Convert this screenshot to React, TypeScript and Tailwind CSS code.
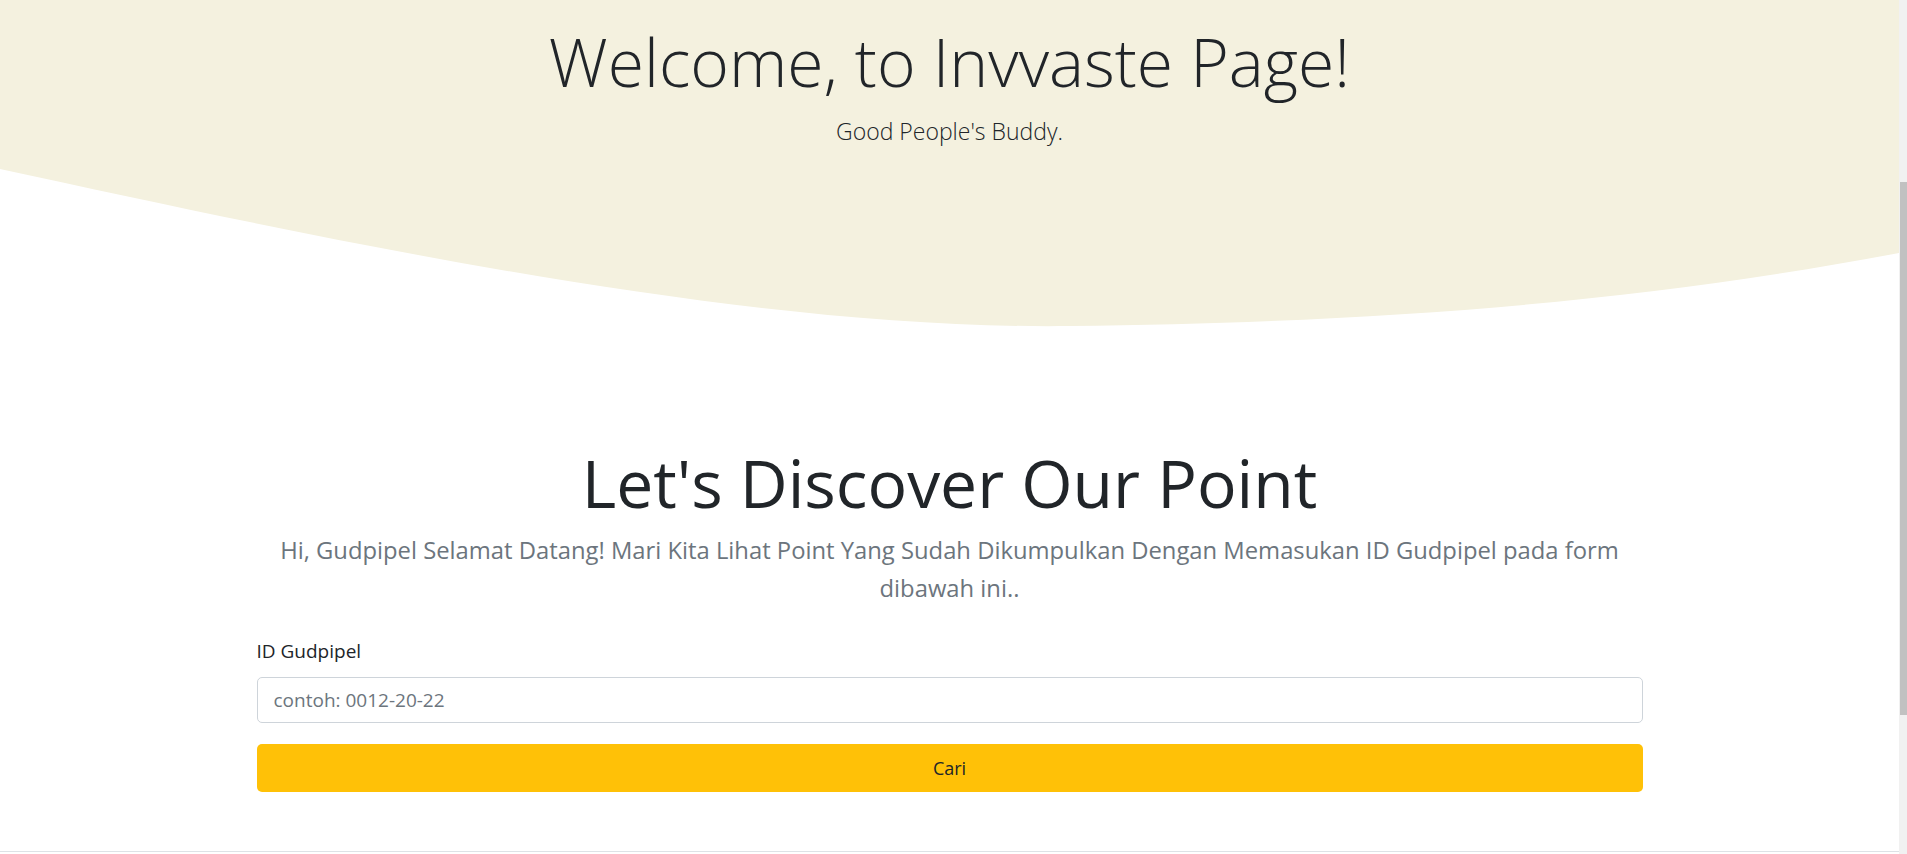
export default function App() {
  const font = { fontFamily: '"Open Sans", "Noto Sans", Arial, sans-serif' };
  return (
    <div className="flex h-[854px] w-[1907px] overflow-hidden bg-white text-[#212529]" style={font}>
      <div className="flex w-[1899px] flex-col">
        <header className="flex h-[169px] flex-col items-center bg-[#f4f1df] pt-[28px]">
          <h1 className="text-[66px] font-light leading-none text-[#212529]">Welcome, to Invvaste Page!</h1>
          <p className="mt-[26px] text-[23px] font-light leading-none text-[#212529]">Good People's Buddy.</p>
        </header>
        <svg className="block h-[161px] w-full" viewBox="0 0 1899 161" preserveAspectRatio="none">
          <path d="M0,0 C350,76 750,161 1070,157 C1400,153 1650,131 1899,84 L1899,0 Z" fill="#f4f1df" />
        </svg>
        <main className="mx-auto flex w-[1386px] flex-col pt-[119px]">
          <h2 className="text-center text-[66px] font-normal leading-none text-[#212529]">Let's Discover Our Point</h2>
          <p className="mt-[16px] text-center text-[23.8px] leading-[38px] text-[#6c757d]">
            Hi, Gudpipel Selamat Datang! Mari Kita Lihat Point Yang Sudah Dikumpulkan Dengan Memasukan ID Gudpipel pada form dibawah ini..
          </p>
          <label className="mt-[35px] text-[19px] leading-none text-[#212529]">ID Gudpipel</label>
          <input
            className="mt-[16px] h-[46px] w-full rounded-[5px] border border-[#ced4da] bg-white px-[16px] text-[19px] text-[#212529] outline-none placeholder:text-[#6c757d]"
            placeholder="contoh: 0012-20-22"
          />
          <button className="mt-[21px] h-[48px] w-full rounded-[5px] bg-[#ffc107] text-[18px] text-[#212529]">Cari</button>
        </main>
        <div className="mt-auto h-[3px] border-t border-[#dee2e6]" />
      </div>
      <div className="flex w-[8px] flex-col bg-[#f1f1f1] pt-[182px]">
        <div className="ml-[1px] h-[533px] w-[7px] bg-[#c1c1c1]" />
      </div>
    </div>
  );
}
